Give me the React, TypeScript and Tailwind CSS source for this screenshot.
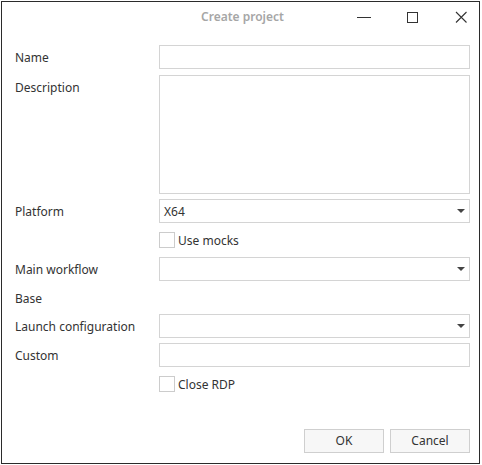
import React from 'react';

const font = { fontFamily: '"Noto Sans", "Open Sans", Arial, sans-serif' };

function Label({ text }: { text: string }) {
  return <div className="w-[144px] shrink-0 text-[12px] text-[#333333] pt-[2px]">{text}</div>;
}

function TextBox({ h = 'h-[24px]' }: { h?: string }) {
  return <div className={`w-[311px] ${h} border border-[#d4d4d4] bg-white`} />;
}

function Select({ value }: { value?: string }) {
  return (
    <div className="w-[311px] h-[24px] border border-[#d4d4d4] bg-white flex items-center justify-between pl-[4px] pr-[3px]">
      <span className="text-[12px] text-[#333333] pt-[2px]">{value}</span>
      <svg width="10" height="6" viewBox="0 0 10 6">
        <path d="M1 1h8L5 5z" fill="#444444" />
      </svg>
    </div>
  );
}

function Check({ text }: { text: string }) {
  return (
    <div className="flex items-center gap-[3px]">
      <div className="w-[16px] h-[16px] border border-[#cccccc] bg-white" />
      <span className="text-[12px] text-[#333333] pt-[2px]">{text}</span>
    </div>
  );
}

export default function App() {
  return (
    <div className="w-[482px] h-[465px] bg-white pl-px pt-px" style={font}>
      <div className="w-[479px] h-[463px] border border-[#2b2b2b] bg-white flex flex-col">
        {/* title bar */}
        <div className="h-[30px] flex items-center relative">
          <div className="flex-1 text-center text-[12px] font-semibold text-[#a6a6a6] pl-[4px]">Create project</div>
          <div className="absolute right-0 top-0 h-[30px] flex items-center">
            <div className="w-[14px] flex justify-center mr-[35px]">
              <svg width="14" height="12" viewBox="0 0 14 12"><path d="M0 6.5h14" stroke="#333" strokeWidth="1" /></svg>
            </div>
            <div className="w-[12px] flex justify-center mr-[25px]">
              <svg width="12" height="12" viewBox="0 0 12 12"><rect x="1.5" y="1.5" width="10" height="10" fill="none" stroke="#333" strokeWidth="1" /></svg>
            </div>
            <div className="w-[36px] flex justify-center">
              <svg width="12" height="12" viewBox="0 0 12 12"><path d="M1 1l10.5 10.5M11.5 1L1 11.5" stroke="#333" strokeWidth="1.1" /></svg>
            </div>
          </div>
        </div>

        {/* form */}
        <div className="flex flex-col pl-[13px] pt-[13px]">
          <div className="flex items-center">
            <Label text="Name" />
            <TextBox />
          </div>
          <div className="flex items-start mt-[6px]">
            <div className="pt-[2px]"><Label text="Description" /></div>
            <TextBox h="h-[119px]" />
          </div>
          <div className="flex items-center mt-[5px]">
            <Label text="Platform" />
            <Select value="X64" />
          </div>
          <div className="flex items-center h-[34px] pl-[144px]">
            <Check text="Use mocks" />
          </div>
          <div className="flex items-center">
            <Label text="Main workflow" />
            <Select />
          </div>
          <div className="flex items-center h-[33px]">
            <Label text="Base" />
          </div>
          <div className="flex items-center">
            <Label text="Launch configuration" />
            <Select />
          </div>
          <div className="flex items-center mt-[5px]">
            <Label text="Custom" />
            <TextBox />
          </div>
          <div className="flex items-center h-[34px] pl-[144px]">
            <Check text="Close RDP" />
          </div>
        </div>

        <div className="flex-1" />
        <div className="flex justify-end gap-[6px] pr-[9px] pb-[10px]">
          <button className="w-[80px] h-[24px] border border-[#cfcfcf] bg-[#f7f7f7] text-[12px] text-[#333333]">OK</button>
          <button className="w-[80px] h-[24px] border border-[#cfcfcf] bg-[#f7f7f7] text-[12px] text-[#333333]">Cancel</button>
        </div>
      </div>
    </div>
  );
}
